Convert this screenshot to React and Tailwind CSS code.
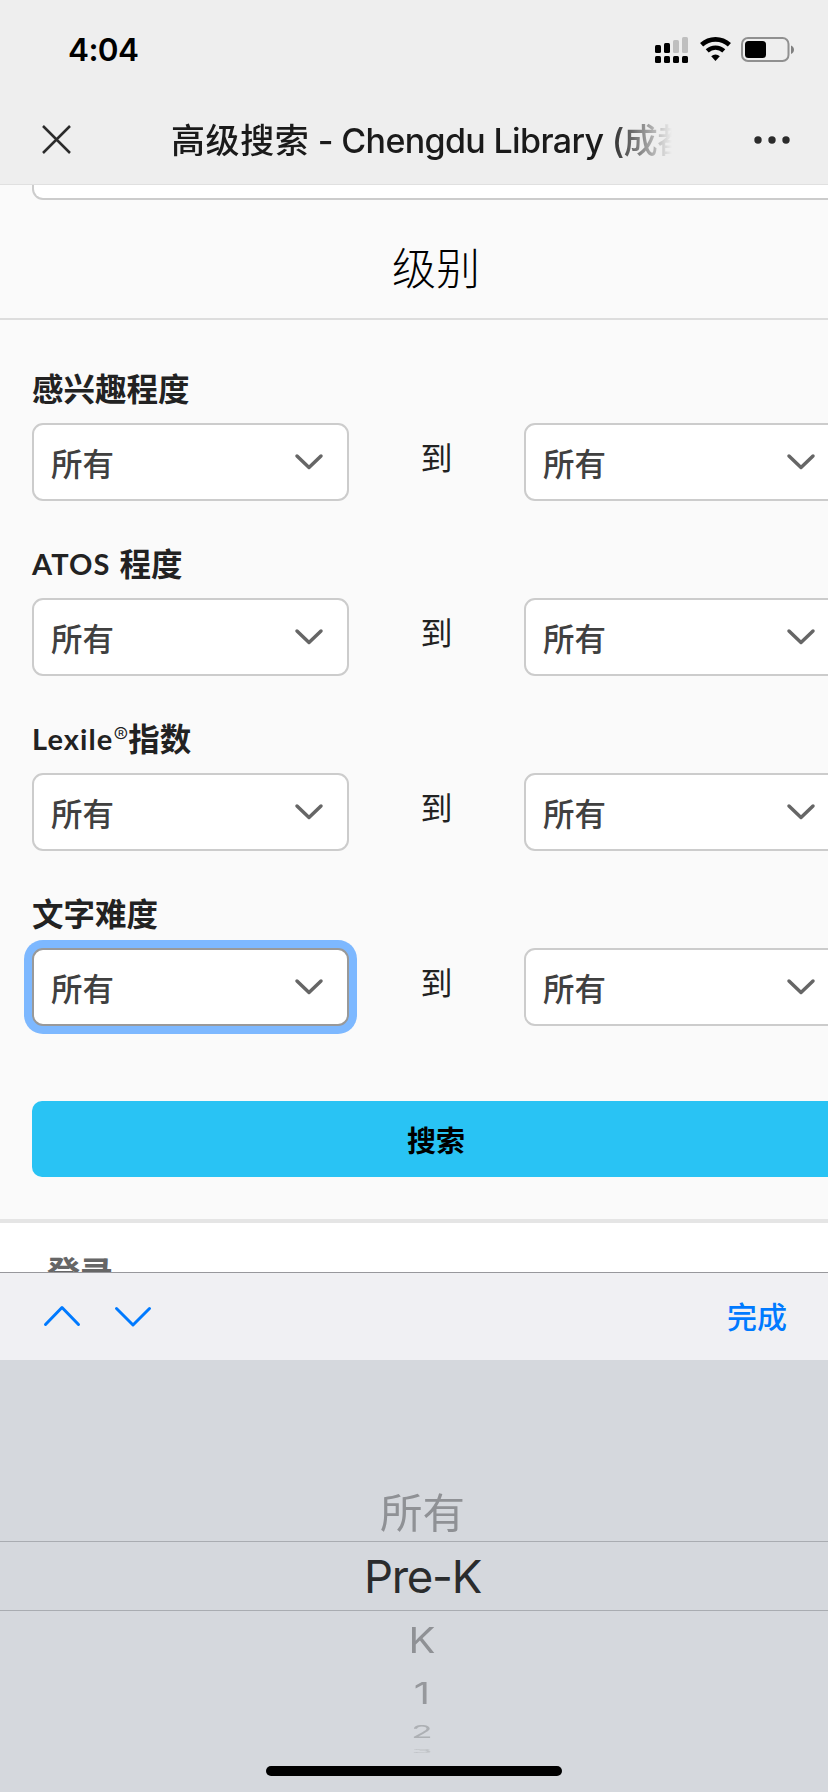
import clsx from "clsx"

const LEVELS = [
  { id: "interest", label: "感兴趣程度" },
  { id: "atos", latin: "ATOS", label: "程度", gap: true },
  { id: "lexile", latin: "Lexile", mark: "®", label: "指数" },
  { id: "text", label: "文字难度", focused: true },
]

const StatusBar = () => (
  <div className="flex h-[98px] items-start justify-between pl-[68px] pr-[34px]">
    <span className="mt-[30px] font-['Inter'] text-[31.5px] leading-[40px] font-semibold tracking-[-0.6px] text-black">
      4:04
    </span>
    <svg className="mt-[36px]" width="140" height="28" viewBox="0 0 140 28">
      <rect x="1" y="9" width="6" height="8" rx="1.5" />
      <rect x="10" y="7" width="6" height="10" rx="1.5" />
      <rect x="19" y="4" width="6" height="13" rx="1.5" fill="#bfbfbf" />
      <rect x="28" y="1" width="6" height="16" rx="1.5" fill="#bfbfbf" />
      <rect x="1" y="20" width="6" height="7" rx="1.5" />
      <rect x="10" y="20" width="6" height="7" rx="1.5" />
      <rect x="19" y="20" width="6" height="7" rx="1.5" />
      <rect x="28" y="20" width="6" height="7" rx="1.5" />
      <path d="M47.6 8.8a20.4 20.4 0 0 1 27.8 0" fill="none" stroke="#000" strokeWidth="4.6" />
      <path d="M53.2 14.9a12.2 12.2 0 0 1 16.6 0" fill="none" stroke="#000" strokeWidth="4.4" />
      <path d="M57.2 20.2a6.5 6.5 0 0 1 8.6 0L61.5 25z" />
      <rect x="88" y="2" width="46.5" height="23" rx="6" fill="none" stroke="#909090" strokeWidth="2" />
      <rect x="91" y="5" width="21" height="17" rx="3.5" />
      <path d="M137 9.5c4 1.5 4 7 0 8.5z" fill="#808080" />
    </svg>
  </div>
)

const TitleBar = () => (
  <div className="flex h-[86px] items-start">
    <svg className="mt-[27px] ml-[42px] shrink-0" width="30" height="30" viewBox="0 0 30 30">
      <path d="M1 1l27 27M28 1L1 28" stroke="#2b2b2b" strokeWidth="2.5" fill="none" />
    </svg>
    <h1 className="mt-[18px] ml-[99px] w-[501px] overflow-hidden font-['Inter','Noto_Sans_CJK_SC',sans-serif] text-[34px] leading-[50px] font-medium whitespace-nowrap text-[#1a1a1a] [mask-image:linear-gradient(to_right,#000_87%,transparent_100%)]">
      <span className="tracking-[0.6px]">高级搜索</span>
      <span className="tracking-[-0.65px]"> - Chengdu Library (</span>
      成都图书馆)
    </h1>
    <svg className="mt-[37px] ml-[81px] shrink-0" width="40" height="10" viewBox="0 0 40 10" fill="#2b2b2b">
      <circle cx="5" cy="5" r="3.7" />
      <circle cx="19" cy="5" r="3.7" />
      <circle cx="33" cy="5" r="3.7" />
    </svg>
  </div>
)

const SelectBox = ({ focused = false }) => (
  <button
    type="button"
    className={clsx(
      "flex h-[78px] w-[317px] shrink-0 items-start justify-between rounded-[11px] border-2 bg-white pr-[23px] pl-[17px]",
      focused ? "border-[#999] ring-8 ring-[#7db8ff]" : "border-[#ccc]"
    )}
  >
    <span className="mt-[15px] text-[31.5px] leading-[44px] font-medium text-[#404040]">所有</span>
    <svg className="mt-[28px]" width="30" height="18" viewBox="0 0 30 18">
      <path
        d="M3 3l12 11.5L27 3"
        fill="none"
        stroke="#666"
        strokeWidth="3.5"
        strokeLinecap="round"
        strokeLinejoin="round"
      />
    </svg>
  </button>
)

const LevelRow = ({ level }) => (
  <div className="h-[175px]">
    <div className="flex h-[56px] items-start text-[31.5px] leading-[40px] font-bold whitespace-nowrap text-[#222]">
      {level.latin && (
        <span className="mt-[2px] font-['Lato'] text-[29px] tracking-[1.1px]">{level.latin}</span>
      )}
      {level.mark && <span className="font-['Inter'] text-[22px] leading-[37px] font-light">{level.mark}</span>}
      <span className={clsx(level.gap && "ml-[9px]")}>{level.label}</span>
    </div>
    <div className="flex items-start">
      <SelectBox focused={level.focused} />
      <span className="mt-[11px] w-[175px] shrink-0 text-center text-[32px] leading-[44px] text-[#222]">到</span>
      <SelectBox />
    </div>
  </div>
)

const KeyboardBar = () => (
  <div className="flex h-[88px] shrink-0 items-start border-t border-[#98989c] bg-[#f0f0f3]">
    <svg className="mt-[31px] ml-[42px]" width="40" height="24" viewBox="0 0 40 24">
      <path d="M3.5 20.5L20 3.5L36.5 20.5" fill="none" stroke="#007aff" strokeWidth="3" strokeLinecap="round" strokeLinejoin="round" />
    </svg>
    <svg className="mt-[31px] ml-[31px]" width="40" height="24" viewBox="0 0 40 24">
      <path d="M3.5 4.5L20 21L36.5 4.5" fill="none" stroke="#007aff" strokeWidth="3" strokeLinecap="round" strokeLinejoin="round" />
    </svg>
    <button type="button" className="mt-[20px] mr-[41px] ml-auto text-[30px] leading-[44px] font-medium text-[#007aff]">
      完成
    </button>
  </div>
)

const Picker = () => (
  <div className="flex h-[432px] shrink-0 flex-col items-center bg-[#d5d8dd] font-['Inter','Noto_Sans_CJK_SC',sans-serif]">
    <div className="mt-[125px] ml-[17px] h-[56px] text-[42.5px] leading-[58px] text-[#8f9195]">
      <span className="inline-block scale-y-[0.95]">所有</span>
    </div>
    <div className="h-[70px] w-full border-y border-[#a9acb1] pl-[17px] text-center text-[45.5px] leading-[70px] tracking-[-1.3px] text-[#2a2c2d]">
      Pre-K
    </div>
    <div className="ml-[16px] flex h-[155px] shrink-0 flex-col items-center text-[#8f9195] [&>span]:shrink-0">
      <span className="mt-[3px] h-[52px] scale-y-[0.9] text-[40px] leading-[52px]">K</span>
      <span className="mt-[1px] h-[52px] scale-y-[0.76] text-[40px] leading-[52px] text-[#96989c]">1</span>
      <span className="-mt-[14px] h-[52px] scale-y-[0.5] text-[35px] leading-[52px] text-[#adb0b4]">2</span>
      <span className="-mt-[32px] h-[52px] scale-y-[0.15] text-[34px] leading-[52px] text-[#bfc2c6]">3</span>
    </div>
    <div className="h-[10px] w-[296px] shrink-0 rounded-full bg-black" />
  </div>
)

export default function App() {
  return (
    <div className="flex h-[1792px] w-[828px] flex-col overflow-hidden bg-[#fafafa] font-['Noto_Sans_CJK_SC',sans-serif]">
      <header className="h-[185px] shrink-0 border-b border-[#e0e0e0] bg-[#eee]">
        <StatusBar />
        <TitleBar />
      </header>

      <main className="h-[1034px] w-[872px] shrink-0">
        <div className="mx-8 h-[15px] rounded-b-[11px] border-2 border-t-0 border-[#ccc] bg-white" />
        <h2 className="h-[120px] border-b-2 border-[#ddd] pt-[36px] text-center text-[44px] leading-[60px] font-light text-black">
          级别
        </h2>
        <div className="px-8 pt-[47px]">
          {LEVELS.map((level) => (
            <LevelRow key={level.id} level={level} />
          ))}
          <button
            type="button"
            className="mt-[34px] block h-[76px] w-full rounded-[10px] bg-[#29c3f4] text-[29px] leading-[74px] font-bold text-black"
          >
            搜索
          </button>
        </div>
      </main>

      <footer className="h-[53px] shrink-0 overflow-hidden border-t-4 border-[#e5e5e5] bg-white pt-[25px] pl-[47px] text-[33px] leading-[46px] font-bold text-[#666]">
        登录
      </footer>

      <KeyboardBar />
      <Picker />
    </div>
  )
}
